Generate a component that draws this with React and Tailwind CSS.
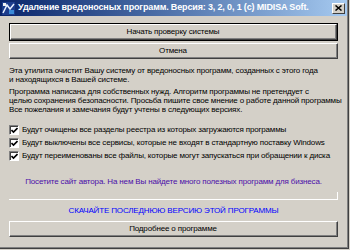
const CHECKS = [
  'Будут очищены все разделы реестра из которых загружаются программы',
  'Будут выключены все сервисы, которые не входят в стандартную поставку Windows',
  'Будут переименованы все файлы, которые могут запускаться при обращении к диска',
];

function Button({ children, isDefault }) {
  if (isDefault) {
    return (
      <div className="border border-black">
        <div className="border-t border-l border-white border-r border-b border-r-[#404040] border-b-[#404040]">
          <div className="h-[14px] flex items-center justify-center border-r border-b border-[#808080] text-[8px] text-black">
            {children}
          </div>
        </div>
      </div>
    );
  }
  return (
    <div className="border-t border-l border-white border-r border-b border-r-[#404040] border-b-[#404040]">
      <div className="h-[14px] flex items-center justify-center border-r border-b border-[#808080] text-[8px] text-black">
        {children}
      </div>
    </div>
  );
}

function CheckBox() {
  return (
    <div className="w-[10px] h-[10px] shrink-0 border-t border-l border-[#808080] border-r border-b border-r-white border-b-white">
      <div className="w-full h-full bg-white border-t border-l border-[#404040] flex items-center justify-center">
        <svg width="7" height="7" viewBox="0 0 7 7">
          <path d="M0.5 3 L2.5 5 L6.5 1" stroke="black" strokeWidth="1.6" fill="none" />
        </svg>
      </div>
    </div>
  );
}

export default function App() {
  return (
    <div className="w-[350px] h-[250px] overflow-hidden bg-[#d4d0c8] font-['Liberation_Sans',Arial,sans-serif] tracking-[-0.15px]">
      <div className="w-[349px] h-[249px] flex flex-col border-r border-b border-[#404040]">
        <div className="flex flex-col flex-1 border-r border-b border-[#808080]">
          <div className="h-[16px] flex items-center bg-gradient-to-r from-[#0a246a] to-[#a6caf0] pl-[2px] pr-[2px]">
            <svg width="13" height="13" viewBox="0 0 13 13" className="shrink-0">
              <rect x="0" y="0" width="13" height="13" fill="#1c3c8c" />
              <path d="M1 11 L5 3 L8 7 L12 2" stroke="#e8f0ff" strokeWidth="1.5" fill="none" />
              <rect x="7" y="8" width="5" height="4" fill="#3a8ad8" />
              <rect x="1" y="1" width="3" height="3" fill="#f0f0f0" />
            </svg>
            <span className="ml-[3px] text-[9px] font-bold text-white whitespace-nowrap">
              Удаление вредоносных программ. Версия: 3, 2, 0, 1 (c) MIDISA Soft.
            </span>
            <div className="ml-auto w-[13px] h-[11px] shrink-0 bg-[#d4d0c8] border-t border-l border-white border-r border-b border-r-[#404040] border-b-[#404040] flex items-center justify-center">
              <svg width="7" height="6" viewBox="0 0 7 6">
                <path d="M0.5 0.5 L6.5 5.5 M6.5 0.5 L0.5 5.5" stroke="black" strokeWidth="1.5" />
              </svg>
            </div>
          </div>

          <div className="flex flex-col px-[9px] pt-[7px]">
            <Button isDefault>Начать проверку системы</Button>
            <div className="mt-[2px]">
              <Button>Отмена</Button>
            </div>

            <p className="mt-[7px] text-[8px] leading-[9px] text-black whitespace-nowrap">
              Эта утилита очистит Вашу систему от вредоносных программ, созданных с этого года
              <br />
              и находящихся в Вашей системе.
            </p>
            <p className="mt-[3px] text-[8px] leading-[9px] text-black whitespace-nowrap">
              Программа написана для собственных нужд. Алгоритм программы не претендует с
              <br />
              целью сохранения безопасности. Просьба пишите свое мнение о работе данной программы
              <br />
              Все пожелания и замечания будут учтены в следующих версиях.
            </p>

            <div className="mt-[11px] flex flex-col gap-[3px]">
              {CHECKS.map((c) => (
                <div key={c} className="flex items-center gap-[3px]">
                  <CheckBox />
                  <span className="text-[8px] leading-[10px] text-black whitespace-nowrap">{c}</span>
                </div>
              ))}
            </div>

            <p className="mt-[16px] text-center text-[8px] leading-[10px] text-[#4b0fa8]">
              Посетите сайт автора. На нем Вы найдете много полезных программ для бизнеса.
            </p>

            <div className="mt-[5px] h-[8px] border-r border-b border-white" />

            <p className="mt-[6px] text-center text-[8px] leading-[10px] text-[#0000ff]">
              СКАЧАЙТЕ ПОСЛЕДНЮЮ ВЕРСИЮ ЭТОЙ ПРОГРАММЫ
            </p>

            <div className="mt-[5px]">
              <Button>Подробнее о программе</Button>
            </div>
          </div>
        </div>
      </div>
    </div>
  );
}
